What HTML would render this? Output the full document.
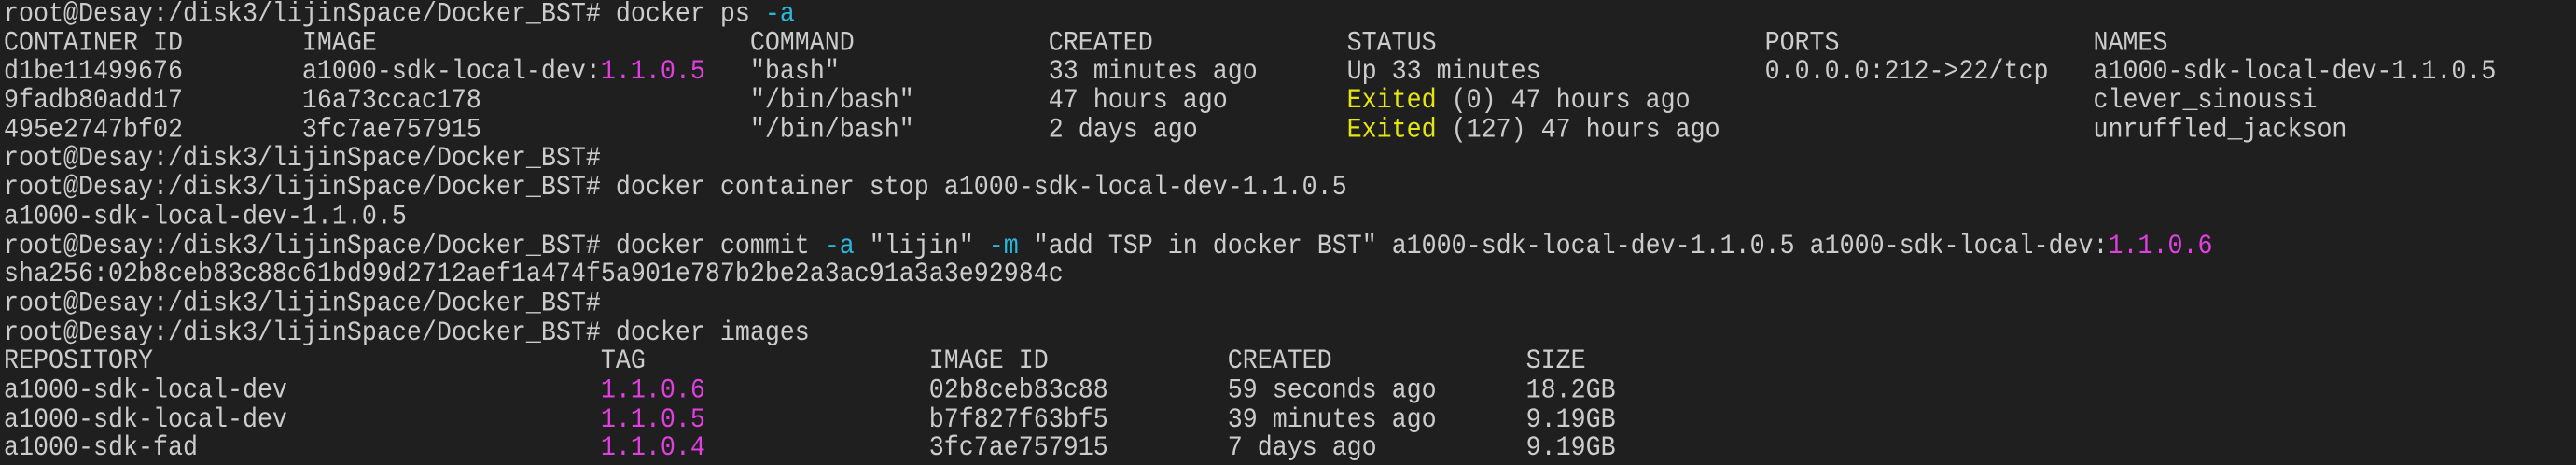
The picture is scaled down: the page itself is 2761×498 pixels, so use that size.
<!DOCTYPE html>
<html><head><meta charset="utf-8"><style>
html,body{margin:0;padding:0;background:#1f1f1f;width:2761px;height:497px;overflow:hidden}
pre{margin:0;position:absolute;left:4px;top:1px;font-family:"Liberation Mono","DejaVu Sans Mono",monospace;font-size:26.67px;line-height:27.68px;color:#cccccc;white-space:pre;transform:scaleY(1.12);transform-origin:0 0}
.c{color:#29b8db}.m{color:#e040e0}.y{color:#e5e510}
</style></head><body><pre>root@Desay:/disk3/lijinSpace/Docker_BST# docker ps <span class="c">-a</span>
CONTAINER ID        IMAGE                         COMMAND             CREATED             STATUS                      PORTS                 NAMES
d1be11499676        a1000-sdk-local-dev:<span class="m">1.1.0.5</span>   "bash"              33 minutes ago      Up 33 minutes               0.0.0.0:212->22/tcp   a1000-sdk-local-dev-1.1.0.5
9fadb80add17        16a73ccac178                  "/bin/bash"         47 hours ago        <span class="y">Exited</span> (0) 47 hours ago                           clever_sinoussi
495e2747bf02        3fc7ae757915                  "/bin/bash"         2 days ago          <span class="y">Exited</span> (127) 47 hours ago                         unruffled_jackson
root@Desay:/disk3/lijinSpace/Docker_BST#
root@Desay:/disk3/lijinSpace/Docker_BST# docker container stop a1000-sdk-local-dev-1.1.0.5
a1000-sdk-local-dev-1.1.0.5
root@Desay:/disk3/lijinSpace/Docker_BST# docker commit <span class="c">-a</span> "lijin" <span class="c">-m</span> "add TSP in docker BST" a1000-sdk-local-dev-1.1.0.5 a1000-sdk-local-dev:<span class="m">1.1.0.6</span>
sha256:02b8ceb83c88c61bd99d2712aef1a474f5a901e787b2be2a3ac91a3a3e92984c
root@Desay:/disk3/lijinSpace/Docker_BST#
root@Desay:/disk3/lijinSpace/Docker_BST# docker images
REPOSITORY                              TAG                   IMAGE ID            CREATED             SIZE
a1000-sdk-local-dev                     <span class="m">1.1.0.6</span>               02b8ceb83c88        59 seconds ago      18.2GB
a1000-sdk-local-dev                     <span class="m">1.1.0.5</span>               b7f827f63bf5        39 minutes ago      9.19GB
a1000-sdk-fad                           <span class="m">1.1.0.4</span>               3fc7ae757915        7 days ago          9.19GB
</pre></body></html>
